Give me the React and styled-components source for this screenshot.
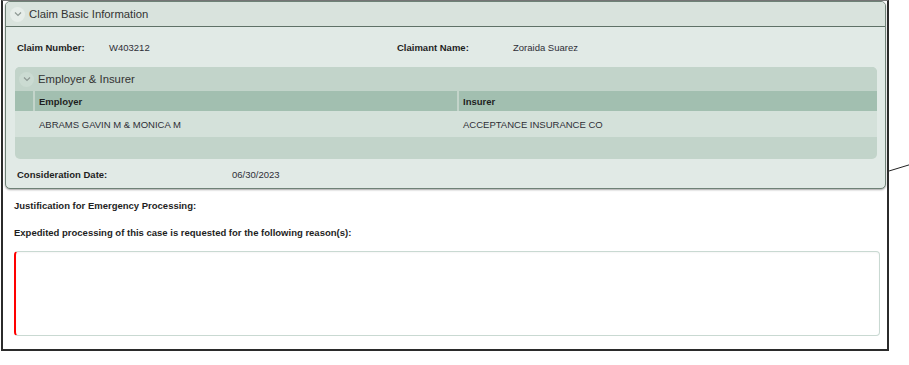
import React from "react";
import styled, { createGlobalStyle } from "styled-components";

const Global = createGlobalStyle`
  html, body { margin: 0; padding: 0; background: #fff; }
  body { font-family: "Liberation Sans", Arial, sans-serif; color: #333; }
  * { box-sizing: border-box; }
`;

const Frame = styled.div`
  position: relative;
  margin-left: 1px;
  width: 888px;
  border: 2px solid #2b2b2b;
  border-top: 1px solid #777;
  padding: 0 1px 13px 2px;
  background: #fff;
`;

const Pointer = styled.svg`
  position: absolute;
  left: 884px;
  top: 160px;
  overflow: visible;
`;

const Panel = styled.section`
  border: 1px solid #6f8277;
  border-radius: 5px;
  background: #e1eae6;
  box-shadow: 0 1px 2px rgba(0, 0, 0, 0.35);
  overflow: hidden;
`;

const PanelHeader = styled.div`
  display: flex;
  align-items: center;
  gap: 4px;
  height: ${(p) => p.$h}px;
  padding-left: 4px;
  background: ${(p) => p.$bg};
  border-bottom: ${(p) => (p.$line ? "1px solid #5f7167" : "none")};
  font-size: 11.3px;
  color: #333;
`;

const ChevronBadge = styled.span`
  display: inline-flex;
  align-items: center;
  justify-content: center;
  width: 15px;
  height: 15px;
  border-radius: 50%;
  background: ${(p) => p.$bg};
`;

const Chevron = ({ bg }) => (
  <ChevronBadge $bg={bg}>
    <svg width="8" height="6" viewBox="0 0 8 6">
      <path d="M1 1.5 L4 4.5 L7 1.5" fill="none" stroke="#8e9994" strokeWidth="1.2" />
    </svg>
  </ChevronBadge>
);

const PanelBody = styled.div`
  padding: 10px 0 4px 0;
`;

const InfoRow = styled.div`
  display: grid;
  grid-template-columns: ${(p) => p.$cols};
  align-items: center;
  height: 20px;
  padding-left: 11px;
  margin-top: ${(p) => p.$mt || 0}px;
  font-size: 9.5px;
`;

const Label = styled.span`
  font-weight: bold;
  color: #1e1e1e;
`;

const Value = styled.span`
  color: #2e2e36;
`;

const InnerPanel = styled.div`
  margin: 10px 8px 0 9px;
  border-radius: 5px;
  background: #c2d4ca;
  overflow: hidden;
`;

const TableRow = styled.div`
  display: flex;
  height: ${(p) => p.$h}px;
  background: ${(p) => p.$bg};
  font-size: 9.5px;
  font-weight: ${(p) => (p.$head ? "bold" : "normal")};
  color: ${(p) => (p.$head ? "#1e1e1e" : "#2e2e36")};
`;

const Gutter = styled.div`
  width: 20px;
  border-right: 2px solid ${(p) => (p.$sep ? "#c3d4ca" : "transparent")};
`;

const Cell = styled.div`
  display: flex;
  align-items: center;
  padding-left: 4px;
  width: ${(p) => (p.$w ? `${p.$w}px` : "auto")};
  flex: ${(p) => (p.$w ? "none" : 1)};
  border-left: ${(p) =>
    p.$divider ? `2px solid ${p.$divider === "show" ? "#c3d4ca" : "transparent"}` : "none"};
`;

const Footer = styled.div`
  height: 22px;
`;

const Note = styled.p`
  margin: ${(p) => p.$mt}px 0 0 9px;
  height: 14px;
  line-height: 14px;
  font-size: 9.5px;
  font-weight: bold;
  color: #1e1e1e;
`;

const Reason = styled.textarea`
  display: block;
  margin: 11px 6px 0 9px;
  width: calc(100% - 15px);
  height: 85px;
  border: 1px solid #c9d9d2;
  border-left: 2px solid #ff0000;
  border-radius: 4px;
  resize: none;
  outline: none;
  background: #fff;
  box-shadow: inset 0 1px 2px rgba(0, 0, 0, 0.04);
  font-family: "Liberation Sans", Arial, sans-serif;
  font-size: 11px;
`;

export default function App() {
  return (
    <>
      <Global />
      <Frame>
        <Panel>
          <PanelHeader $h={25} $bg="#d9e3dd" $line>
            <Chevron bg="#e6ede9" />
            <span>Claim Basic Information</span>
          </PanelHeader>
          <PanelBody>
            <InfoRow $cols="92px 288px 116px 1fr">
              <Label>Claim Number:</Label>
              <Value>W403212</Value>
              <Label>Claimant Name:</Label>
              <Value>Zoraida Suarez</Value>
            </InfoRow>
            <InnerPanel>
              <PanelHeader $h={24} $bg="#c2d4ca">
                <Chevron bg="#cbdbd2" />
                <span>Employer &amp; Insurer</span>
              </PanelHeader>
              <TableRow $h={20} $bg="#a2bfb0" $head>
                <Gutter $sep />
                <Cell $w={422}>Employer</Cell>
                <Cell $divider="show">Insurer</Cell>
              </TableRow>
              <TableRow $h={26} $bg="#d4e1da">
                <Gutter />
                <Cell $w={422}>ABRAMS GAVIN M &amp; MONICA M</Cell>
                <Cell $divider="hide">ACCEPTANCE INSURANCE CO</Cell>
              </TableRow>
              <Footer />
            </InnerPanel>
            <InfoRow $cols="215px 1fr" $mt={5}>
              <Label>Consideration Date:</Label>
              <Value>06/30/2023</Value>
            </InfoRow>
          </PanelBody>
        </Panel>
        <Note $mt={10}>Justification for Emergency Processing:</Note>
        <Note $mt={13}>
          Expedited processing of this case is requested for the following reason(s):
        </Note>
        <Reason aria-label="Reason" />
        <Pointer width="26" height="14" viewBox="0 0 26 14">
          <line x1="2" y1="10" x2="25" y2="3" stroke="#222" strokeWidth="1" />
        </Pointer>
      </Frame>
    </>
  );
}
